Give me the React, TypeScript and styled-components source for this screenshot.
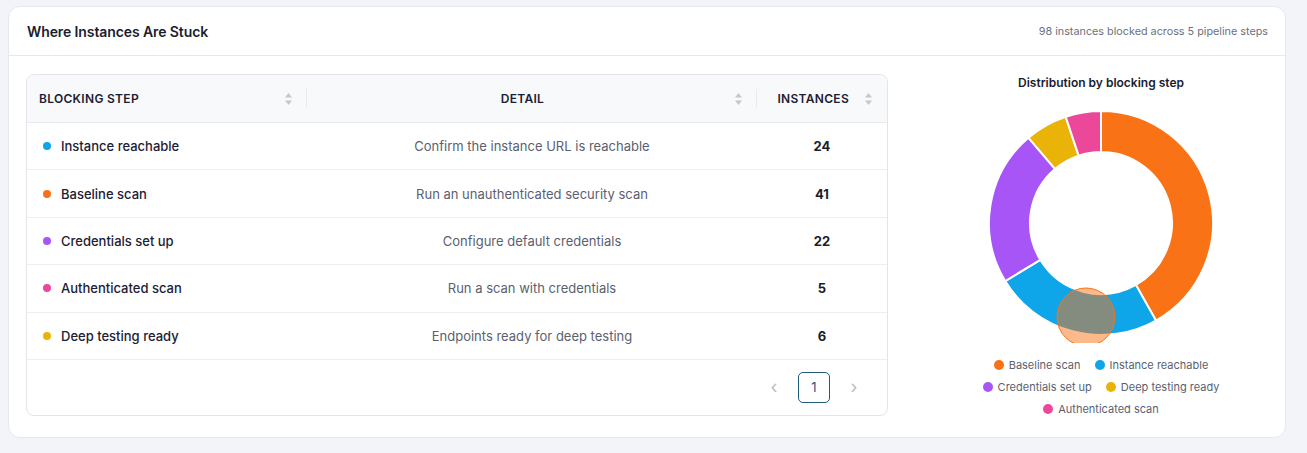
import * as React from "react";
import styled, { createGlobalStyle } from "styled-components";

type Step = {
  name: string;
  detail: string;
  count: number;
  color: string;
};

const steps: Step[] = [
  { name: "Instance reachable", detail: "Confirm the instance URL is reachable", count: 24, color: "#0ea5e9" },
  { name: "Baseline scan", detail: "Run an unauthenticated security scan", count: 41, color: "#f97316" },
  { name: "Credentials set up", detail: "Configure default credentials", count: 22, color: "#a855f7" },
  { name: "Authenticated scan", detail: "Run a scan with credentials", count: 5, color: "#ec4899" },
  { name: "Deep testing ready", detail: "Endpoints ready for deep testing", count: 6, color: "#eab308" },
];

// order the chart draws its slices in, clockwise from 12 o'clock
const chartOrder = ["Baseline scan", "Instance reachable", "Credentials set up", "Deep testing ready", "Authenticated scan"];

const GlobalStyle = createGlobalStyle`
  body {
    margin: 0;
    background: #f3f4f9;
    font-family: "Inter", "Liberation Sans", sans-serif;
    color: #1c2033;
  }
`;

const SortIcon: React.FC = () => (
  <svg width="9" height="14" viewBox="0 0 9 14">
    <path d="M4.5 1 L8 5.5 H1 Z" fill="#c4c7cc" />
    <path d="M4.5 13 L8 8.5 H1 Z" fill="#c4c7cc" />
  </svg>
);

const polar = (cx: number, cy: number, r: number, deg: number) => {
  const rad = ((deg - 90) * Math.PI) / 180;
  return [cx + r * Math.cos(rad), cy + r * Math.sin(rad)];
};

const slicePath = (cx: number, cy: number, ro: number, ri: number, a0: number, a1: number) => {
  const [x0, y0] = polar(cx, cy, ro, a0);
  const [x1, y1] = polar(cx, cy, ro, a1);
  const [x2, y2] = polar(cx, cy, ri, a1);
  const [x3, y3] = polar(cx, cy, ri, a0);
  const large = a1 - a0 > 180 ? 1 : 0;
  return `M${x0} ${y0} A${ro} ${ro} 0 ${large} 1 ${x1} ${y1} L${x2} ${y2} A${ri} ${ri} 0 ${large} 0 ${x3} ${y3} Z`;
};

const Donut: React.FC = () => {
  const total = steps.reduce((s, x) => s + x.count, 0);
  let angle = 0;
  const ordered = chartOrder.map((n) => steps.find((s) => s.name === n)!);
  return (
    <svg width="240" height="240" viewBox="0 0 240 240">
      {ordered.map((s) => {
        const a0 = angle;
        const a1 = angle + (s.count / total) * 360;
        angle = a1;
        return (
          <path
            key={s.name}
            d={slicePath(120, 120, 112, 71, a0, a1)}
            fill={s.color}
            stroke="#ffffff"
            strokeWidth="2"
          />
        );
      })}
      <circle cx="105" cy="214" r="29" fill="rgba(249,115,22,0.5)" stroke="#f97316" strokeWidth="1" />
    </svg>
  );
};

export default function App() {
  const legend = chartOrder.map((n) => steps.find((s) => s.name === n)!);
  return (
    <>
      <GlobalStyle />
      <Page>
        <Card>
          <CardHeader>
            <Title>Where Instances Are Stuck</Title>
            <Summary>98 instances blocked across 5 pipeline steps</Summary>
          </CardHeader>
          <CardBody>
            <TableBox>
              <HeadRow>
                <HeadCell>
                  <HeadLabel $align="left">BLOCKING STEP</HeadLabel>
                  <SortIcon />
                  <Divider />
                </HeadCell>
                <HeadCell>
                  <HeadLabel $align="center">DETAIL</HeadLabel>
                  <SortIcon />
                  <Divider />
                </HeadCell>
                <HeadCell>
                  <HeadLabel $align="right">INSTANCES</HeadLabel>
                  <SortIcon />
                </HeadCell>
              </HeadRow>
              {steps.map((s) => (
                <Row key={s.name}>
                  <NameCell>
                    <Dot $color={s.color} />
                    {s.name}
                  </NameCell>
                  <DetailCell>{s.detail}</DetailCell>
                  <CountCell>{s.count}</CountCell>
                </Row>
              ))}
              <Pager>
                <PageArrow>‹</PageArrow>
                <PageButton>1</PageButton>
                <PageArrow>›</PageArrow>
              </Pager>
            </TableBox>
            <ChartPanel>
              <ChartTitle>Distribution by blocking step</ChartTitle>
              <DonutWrap>
                <Donut />
              </DonutWrap>
              <Legend>
                {legend.map((s) => (
                  <LegendItem key={s.name}>
                    <LegendDot $color={s.color} />
                    {s.name}
                  </LegendItem>
                ))}
              </Legend>
            </ChartPanel>
          </CardBody>
        </Card>
      </Page>
    </>
  );
}

const Page = styled.div`
  padding: 6px 21px 15px 8px;
`;

const Card = styled.div`
  background: #ffffff;
  border: 1px solid #e6e8ef;
  border-radius: 12px;
`;

const CardHeader = styled.div`
  display: flex;
  align-items: center;
  justify-content: space-between;
  height: 48px;
  padding: 0 17px 0 18px;
  border-bottom: 1px solid #e6e8ef;
`;

const Title = styled.h2`
  margin: 0;
  font-size: 14px;
  font-weight: 600;
  color: #1a1d2e;
  letter-spacing: -0.1px;
`;

const Summary = styled.span`
  font-size: 10.8px;
  color: #6b7080;
`;

const CardBody = styled.div`
  display: flex;
  align-items: flex-start;
  padding: 18px 17px 20px 17px;
`;

const TableBox = styled.div`
  width: 860px;
  flex: none;
  border: 1px solid #e3e5ea;
  border-radius: 8px;
  overflow: hidden;
`;

const HeadRow = styled.div`
  display: grid;
  grid-template-columns: 280px 450px 1fr;
  height: 47px;
  background: #f8f9fb;
  border-bottom: 1px solid #e8eaee;
`;

const HeadCell = styled.div`
  position: relative;
  display: flex;
  align-items: center;
  padding: 0 14px 0 12px;
  gap: 8px;
`;

const HeadLabel = styled.span<{ $align: "left" | "center" | "right" }>`
  flex: 1;
  text-align: ${(p) => p.$align};
  margin-right: ${(p) => (p.$align === "right" ? "7px" : "0")};
  font-size: 12px;
  font-weight: 600;
  letter-spacing: 0.3px;
  color: #1c2033;
`;

const Divider = styled.span`
  position: absolute;
  right: 0;
  top: 14px;
  bottom: 14px;
  width: 1px;
  background: #e8eaee;
`;

const Row = styled.div`
  display: grid;
  grid-template-columns: 280px 450px 1fr;
  align-items: center;
  height: 46.4px;
  border-bottom: 1px solid #eceef2;
  font-size: 13px;
`;

const NameCell = styled.div`
  display: flex;
  align-items: center;
  gap: 10px;
  padding-left: 16px;
  font-weight: 500;
  color: #1c2033;
`;

const Dot = styled.span<{ $color: string }>`
  width: 8px;
  height: 8px;
  border-radius: 50%;
  background: ${(p) => p.$color};
`;

const DetailCell = styled.div`
  text-align: center;
  color: #5b5f70;
`;

const CountCell = styled.div`
  text-align: center;
  font-weight: 700;
  color: #1a1d2e;
`;

const Pager = styled.div`
  display: flex;
  justify-content: flex-end;
  align-items: center;
  gap: 16px;
  height: 55px;
  padding-right: 25px;
`;

const PageArrow = styled.span`
  font-size: 18px;
  color: #b8bcc4;
  width: 16px;
  text-align: center;
  line-height: 1;
`;

const PageButton = styled.div`
  display: flex;
  align-items: center;
  justify-content: center;
  width: 30px;
  height: 29px;
  border: 1px solid #1f5a78;
  border-radius: 5px;
  font-size: 13px;
  color: #1f5a78;
`;

const ChartPanel = styled.div`
  flex: 1;
  display: flex;
  flex-direction: column;
  align-items: center;
  padding-left: 46px;
`;

const ChartTitle = styled.div`
  font-size: 12px;
  font-weight: 600;
  color: #1a1d2e;
  margin-top: 1px;
`;

const DonutWrap = styled.div`
  margin-top: 13px;
  height: 240px;
`;

const Legend = styled.div`
  display: flex;
  flex-wrap: wrap;
  justify-content: center;
  column-gap: 14px;
  row-gap: 6px;
  width: 260px;
  margin-top: 14px;
`;

const LegendItem = styled.div`
  display: flex;
  align-items: center;
  gap: 5px;
  font-size: 11px;
  color: #5b5f70;
  line-height: 16px;
`;

const LegendDot = styled.span<{ $color: string }>`
  width: 10px;
  height: 10px;
  border-radius: 50%;
  background: ${(p) => p.$color};
`;
